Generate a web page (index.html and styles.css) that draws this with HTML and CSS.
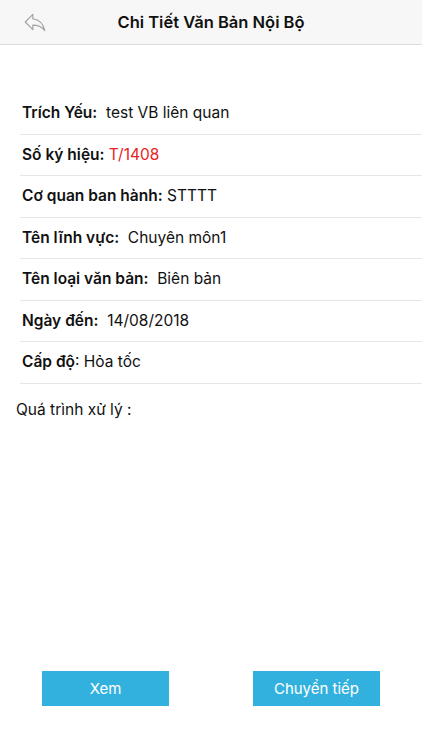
FILE: index.html
```html
<!DOCTYPE html>
<html lang="vi">
<head>
<meta charset="utf-8">
<title>Chi Tiết Văn Bản Nội Bộ</title>
<link rel="stylesheet" href="styles.css">
</head>
<body>
<div class="app">
  <header class="navbar">
    <button class="back" aria-label="Quay lại">
      <svg width="26" height="26" viewBox="0 0 24 24"><path d="M10 9V5l-7 7 7 7v-4.1c5 0 8.5 1.6 11 5.1-1-5-4-10-11-11z" fill="none" stroke="#a3a3a3" stroke-width="1.1" stroke-linejoin="round"/></svg>
    </button>
    <h1 class="title">Chi Tiết Văn Bản Nội Bộ</h1>
  </header>
  <main class="content">
    <ul class="fields">
      <li class="field"><span class="label">Trích Yếu:</span>&nbsp; test VB liên quan</li>
      <li class="field"><span class="label">Số ký hiệu:</span> <span class="red">T/1408</span></li>
      <li class="field"><span class="label">Cơ quan ban hành:</span> STTTT</li>
      <li class="field"><span class="label">Tên lĩnh vực:</span>&nbsp; Chuyên môn1</li>
      <li class="field"><span class="label">Tên loại văn bản:</span>&nbsp; Biên bản</li>
      <li class="field"><span class="label">Ngày đến:</span>&nbsp; 14/08/2018</li>
      <li class="field"><span class="label">Cấp độ</span>: Hỏa tốc</li>
    </ul>
    <p class="process">Quá trình xử lý :</p>
  </main>
  <footer class="actions">
    <button class="btn">Xem</button>
    <button class="btn">Chuyển tiếp</button>
  </footer>
</div>
</body>
</html>
```
FILE: styles.css
```css
* { box-sizing: border-box; }
html, body { margin: 0; padding: 0; background: #fff; }
body {
  font-family: Inter, "Liberation Sans", Arial, sans-serif;
  color: #111;
}
.app {
  display: flex;
  flex-direction: column;
  min-height: 750px;
}
.navbar {
  height: 45px;
  background: #f7f7f7;
  border-bottom: 1px solid #dcdcdc;
  display: flex;
  align-items: center;
  justify-content: center;
  position: relative;
}
.back {
  position: absolute;
  left: 22px;
  top: 9px;
  border: 0;
  background: none;
  padding: 0;
  width: 26px;
  height: 26px;
}
.title {
  margin: 0;
  font-size: 16.5px;
  font-weight: 600;
  color: #111;
}
.content {
  flex: 1;
  padding-top: 48px;
}
.fields {
  list-style: none;
  margin: 0 0 0 20px;
  padding: 0;
}
.field {
  height: 41.5px;
  line-height: 40.5px;
  border-bottom: 1px solid #e6e6e6;
  padding-left: 2px;
  font-size: 15.5px;
  white-space: pre;
}
.label { font-weight: 600; }
.red { color: #e8231f; }
.process {
  margin: 16px 0 0 16px;
  font-size: 15.5px;
}
.actions {
  display: flex;
  justify-content: space-between;
  padding: 0 42px 44px;
}
.btn {
  width: 127px;
  height: 35px;
  border: 0;
  background: #33b1de;
  color: #fff;
  font-family: inherit;
  font-size: 15px;
}
```
